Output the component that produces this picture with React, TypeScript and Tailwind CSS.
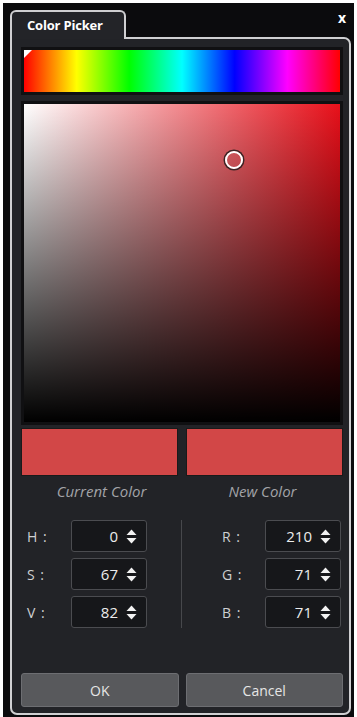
import React from 'react';

const FONT = '"Open Sans", "Noto Sans", sans-serif';

function Spinner() {
  return (
    <svg width="11" height="15" viewBox="0 0 11 15" className="shrink-0" aria-hidden>
      <path d="M5.5 0.5 L10.5 6 L0.5 6 Z" fill="#f2f2f2" />
      <path d="M0.5 9 L10.5 9 L5.5 14.5 Z" fill="#f2f2f2" />
    </svg>
  );
}

function NumField({ value }: { value: number }) {
  return (
    <div className="w-[76px] h-full flex items-center justify-end gap-[8px] pr-[9px] rounded-[3px] border border-[#4b4c50] bg-[#16171a]">
      <span className="text-[15px] text-[#ececec] leading-none">{value}</span>
      <Spinner />
    </div>
  );
}

const rows = [
  { l: 'H', lv: 0, r: 'R', rv: 210 },
  { l: 'S', lv: 67, r: 'G', rv: 71 },
  { l: 'V', lv: 82, r: 'B', rv: 71 },
];

export default function App() {
  return (
    <div className="w-[357px] h-[717px] bg-white pl-[3px] pt-[3px]" style={{ fontFamily: FONT }}>
      <div className="w-[351px] h-[714px] bg-[#0b0b0d] pl-[7px] pr-[3px] pt-[7px] pb-[2px] flex flex-col">
        {/* title row */}
        <div className="flex items-end justify-between">
          <div className="relative z-10 -mb-[2px] w-[116px] h-[29px] rounded-t-[6px] border-2 border-b-0 border-[#cfcfd1] bg-[#232428] flex items-center pl-[15px] pt-[1px]">
            <span className="text-[13px] font-bold text-white tracking-[-0.2px]">Color Picker</span>
          </div>
          <span className="text-[14px] font-bold text-white leading-none pr-[5px] mb-[12px]">x</span>
        </div>

        {/* panel */}
        <div className="flex-1 flex flex-col rounded-[7px] rounded-tl-none border-2 border-[#cfcfd1] bg-[#222327] pl-[9px] pr-[6px] pt-[8px] pb-[6px]">
          {/* hue bar */}
          <div className="relative h-[48px] border-[3px] border-[#101012] bg-[linear-gradient(to_right,#ff0000,#ffff00,#00ff00,#00ffff,#0000ff,#ff00ff,#ff0000)]">
            <svg width="8" height="8" viewBox="0 0 8 8" className="absolute left-0 top-0" aria-hidden>
              <path d="M0 0 L8 0 L0 8 Z" fill="#ffffff" />
            </svg>
          </div>

          {/* saturation / value square */}
          <div className="relative mt-[6px] h-[324px] border-[3px] border-[#101012] bg-[linear-gradient(to_right,#ffffff,#e8101a)]">
            <div className="absolute inset-0 bg-[linear-gradient(to_top,#000000_0%,rgba(0,0,0,0.85)_15%,rgba(0,0,0,0)_100%)]" />
            <div className="absolute left-[201px] top-[47px] w-[18px] h-[18px] rounded-full border-2 border-white shadow-[0_0_0_1.5px_#3a2424]" />
          </div>

          {/* swatches */}
          <div className="mt-[3px] flex gap-[8px] h-[48px]">
            <div className="flex-1 bg-[#d24747] border border-[#1a1a1a]" />
            <div className="flex-1 bg-[#d24747] border border-[#1a1a1a]" />
          </div>
          <div className="flex h-[31px] items-center">
            <span className="flex-1 text-center italic text-[15px] text-[#a3a4a8]">Current Color</span>
            <span className="flex-1 text-center italic text-[15px] text-[#a3a4a8]">New Color</span>
          </div>

          {/* HSV / RGB fields */}
          <div className="mt-[13px] flex">
            <div className="w-[156px] flex flex-col gap-[6px]">
              {rows.map((r) => (
                <div key={r.l} className="flex h-[32px] items-center">
                  <span className="w-[50px] pl-[6px] text-[14px] text-[#cfd0d2] tracking-[1px]">{r.l} :</span>
                  <NumField value={r.lv} />
                </div>
              ))}
            </div>
            <div className="w-[8px] flex justify-center">
              <div className="w-px bg-[#47484c]" />
            </div>
            <div className="flex-1 flex flex-col gap-[6px]">
              {rows.map((r) => (
                <div key={r.r} className="flex h-[32px] items-center">
                  <span className="w-[80px] pl-[37px] text-[14px] text-[#cfd0d2] tracking-[1px]">{r.r} :</span>
                  <NumField value={r.rv} />
                </div>
              ))}
            </div>
          </div>

          {/* buttons */}
          <div className="mt-auto flex gap-[7px] h-[34px]">
            <button className="flex-1 rounded-[3px] border border-[#6d6e72] bg-[#58595c] text-[14px] text-[#e6e6e6]">OK</button>
            <button className="flex-1 rounded-[3px] border border-[#6d6e72] bg-[#58595c] text-[14px] text-[#e6e6e6]">Cancel</button>
          </div>
        </div>
      </div>
    </div>
  );
}
